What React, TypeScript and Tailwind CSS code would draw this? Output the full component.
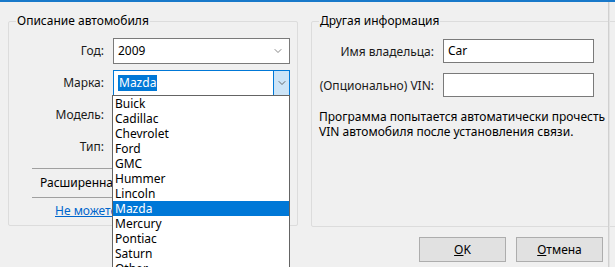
import { ChevronDown } from "lucide-react";

const makes = [
  "Buick",
  "Cadillac",
  "Chevrolet",
  "Ford",
  "GMC",
  "Hummer",
  "Lincoln",
  "Mazda",
  "Mercury",
  "Pontiac",
  "Saturn",
  "Other",
];

const Label = ({ children }: { children: React.ReactNode }) => (
  <div className="flex items-center justify-end h-[26px] text-[#1a1a1a]">
    {children}
  </div>
);

const App = () => {
  return (
    <div
      className="relative w-[615px] h-[267px] overflow-hidden bg-[#f0f0f0] text-[12px] text-black border-t-[2px] border-[#1979ca]"
      style={{ fontFamily: '"Noto Sans", "Open Sans", sans-serif' }}
    >
      <div className="absolute right-[5px] top-0 bottom-0 w-[2px] bg-[#e3e3e3] border-l border-[#d0d0d0]" />
      <div className="flex gap-[13px] pl-[8px] pt-[11px]">
        {/* left group */}
        <fieldset className="w-[290px] h-[213px] border border-[#dcdcdc] rounded-[2px] px-[7px]">
          <legend className="px-[1px] leading-[16px]">Описание автомобиля</legend>
          <div className="grid grid-cols-[88px_177px] gap-x-[9px] gap-y-[6px] mt-[9px]">
            <Label>Год:</Label>
            <div className="h-[26px] border border-[#7a7a7a] bg-white flex items-center justify-between pl-[4px] pr-[5px]">
              <span>2009</span>
              <ChevronDown size={12} strokeWidth={1.5} className="text-[#606060]" />
            </div>
            <Label>Марка:</Label>
            <div className="h-[26px] border border-[#0078d7] bg-white flex items-center">
              <span className="ml-[4px] px-[1px] leading-[16px] bg-[#0078d7] text-white">
                Mazda
              </span>
              <div className="ml-auto h-full w-[16px] bg-[#cce4f7] border-l border-[#0078d7] flex items-center justify-center">
                <ChevronDown size={12} strokeWidth={1.5} className="text-[#404040]" />
              </div>
            </div>
            <Label>Модель:</Label>
            <div />
            <Label>Тип:</Label>
            <div />
          </div>
          <div className="ml-[16px] mt-[8px] mr-[4px] border-t border-[#a0a0a0]" />
          <div className="pl-[24px] h-[28px] flex items-center">Расширенная информация</div>
          <div className="ml-[16px] mr-[4px] border-t border-[#a0a0a0]" />
          <div className="pl-[39px] h-[26px] flex items-center">
            <span className="text-[#0066cc] underline">Не можете найти автомобиль?</span>
          </div>
        </fieldset>

        {/* right group */}
        <fieldset className="w-[292px] h-[214px] border border-[#dcdcdc] rounded-[2px] px-[7px]">
          <legend className="px-[1px] leading-[16px]">Другая информация</legend>
          <div className="grid grid-cols-[115px_151px] gap-x-[9px] gap-y-[8px] mt-[10px]">
            <Label>Имя владельца:</Label>
            <div className="h-[24px] border border-[#7a7a7a] bg-white flex items-center pl-[4px]">
              Car
            </div>
            <Label>(Опционально) VIN:</Label>
            <div className="h-[24px] border border-[#7a7a7a] bg-white" />
          </div>
          <p className="mt-[10px] w-[290px] leading-[15px]">
            Программа попытается автоматически прочесть VIN автомобиля после
            установления связи.
          </p>
        </fieldset>
      </div>

      <div className="flex justify-end gap-[10px] pr-[12px] mt-[10px]">
        <button className="w-[87px] h-[25px] bg-[#e1e1e1] border border-[#adadad]">
          <span className="underline">O</span>K
        </button>
        <button className="w-[87px] h-[25px] bg-[#e1e1e1] border border-[#adadad]">
          <span className="underline">О</span>тмена
        </button>
      </div>

      {/* open dropdown list */}
      <div className="absolute left-[112px] top-[93px] w-[178px] h-[190px] bg-white border border-[#646464]">
        {makes.map((m) => (
          <div
            key={m}
            className={
              m === "Mazda"
                ? "h-[15px] leading-[15px] pl-[2px] bg-[#0078d7] text-white"
                : "h-[15px] leading-[15px] pl-[2px]"
            }
          >
            {m}
          </div>
        ))}
      </div>
    </div>
  );
};

export default App;
